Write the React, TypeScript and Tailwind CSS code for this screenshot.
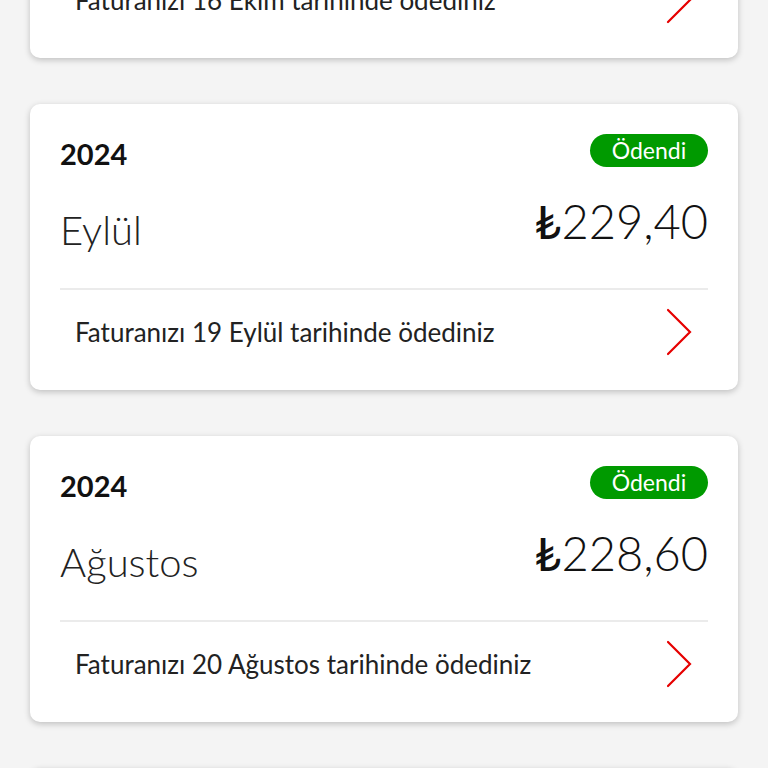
import React from 'react';

interface Bill {
  year: string;
  month: string;
  amount: string;
  paidText: string;
}

const BILLS: Bill[] = [
  { year: '2024', month: 'Ekim', amount: '229,40', paidText: 'Faturanızı 16 Ekim tarihinde ödediniz' },
  { year: '2024', month: 'Eylül', amount: '229,40', paidText: 'Faturanızı 19 Eylül tarihinde ödediniz' },
  { year: '2024', month: 'Ağustos', amount: '228,60', paidText: 'Faturanızı 20 Ağustos tarihinde ödediniz' },
  { year: '2024', month: 'Temmuz', amount: '228,60', paidText: 'Faturanızı 18 Temmuz tarihinde ödediniz' },
];

const Chevron: React.FC = () => (
  <svg width="28" height="48" viewBox="0 0 28 48" fill="none">
    <path d="M3 2 L25 24 L3 46" stroke="#e60000" strokeWidth="2.2" strokeLinecap="round" strokeLinejoin="miter" />
  </svg>
);

const BillCard: React.FC<{ bill: Bill }> = ({ bill }) => {
  return (
    <div className="bg-white rounded-[10px] shadow-[0_2px_6px_rgba(0,0,0,0.22)] h-[286px] flex flex-col pt-[30px] px-[30px]">
      <div className="h-[33px] flex items-center justify-between">
        <div className="text-[29px] font-bold text-[#111] leading-none pt-[6px]">{bill.year}</div>
        <div className="h-[33px] w-[118px] rounded-full bg-[#009a00] flex items-center justify-center text-white text-[23px] leading-none">
          Ödendi
        </div>
      </div>

      <div className="h-[121px] flex items-center justify-between">
        <div className="text-[40px] font-light text-[#222] leading-none pt-[4px]">{bill.month}</div>
        <div className="text-[47px] font-light text-[#111] leading-none pb-[12px]">
          <span className="font-normal">₺</span>
          {bill.amount}
        </div>
      </div>

      <div className="h-[2px] bg-[#ebebeb]" />

      <div className="h-[100px] pb-[16px] px-[15px] flex items-center justify-between">
        <div className="text-[26px] text-[#222] leading-none">{bill.paidText}</div>
        <Chevron />
      </div>
    </div>
  );
};

export default function App() {
  return (
    <div
      className="w-[768px] h-[768px] overflow-hidden bg-[#f4f4f4]"
      style={{ fontFamily: 'Lato, "Noto Sans", sans-serif' }}
    >
      <div className="mt-[-228px] px-[30px] flex flex-col gap-[46px]">
        {BILLS.map((b, i) => (
          <BillCard key={i} bill={b} />
        ))}
      </div>
    </div>
  );
}
